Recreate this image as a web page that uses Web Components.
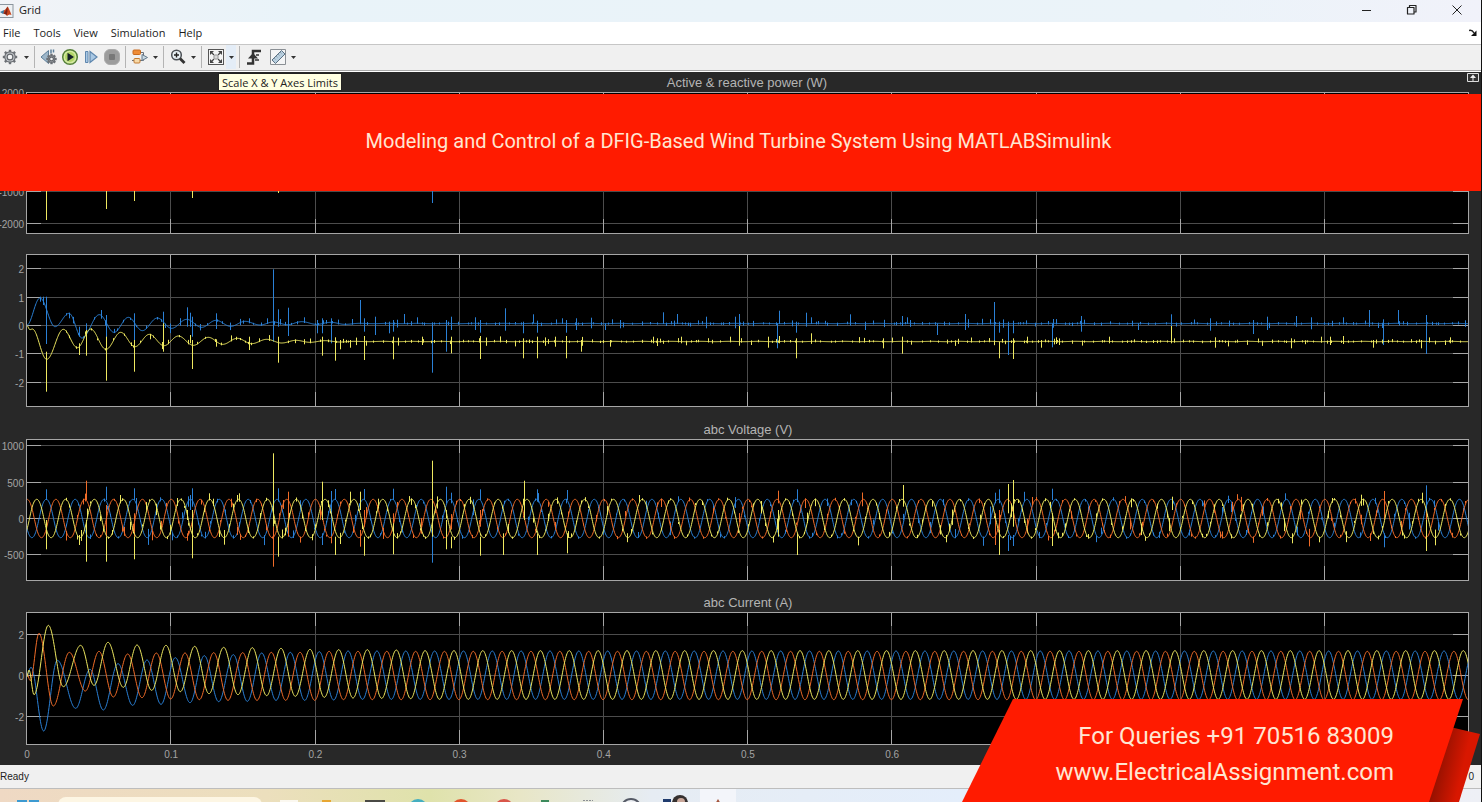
<!DOCTYPE html>
<html lang="en">
<head>
<meta charset="utf-8">
<title>Grid</title>
<style>
  body { margin: 0; background: #282828; }
</style>
</head>
<body>
<scope-app></scope-app>

<script>
const UI = '"Open Sans", "Noto Sans", sans-serif';
const ARIAL = '"Liberation Sans", Arial, sans-serif';

function define(name, html, setup) {
  const template = document.createElement('template');
  template.innerHTML = html;
  customElements.define(name, class extends HTMLElement {
    constructor() {
      super();
      this.attachShadow({ mode: 'open' }).append(template.content.cloneNode(true));
    }
    connectedCallback() { if (setup) setup(this, this.shadowRoot); }
  });
}

/* ---------- title bar ---------- */
define('title-bar', `
<style>
  :host { display: flex; align-items: center; height: 22px; background: linear-gradient(90deg, #f1f3f7, #e9f3f9 20%, #ebf3f9 80%, #f1f2fa); font: 11px/20px ${UI}; color: #1a1a1a; }
  h1 { margin: 0 auto 2px 5px; font: inherit; }
  svg { display: block; }
  button { width: 45px; height: 20px; padding: 0; border: 0; background: none; display: grid; place-items: center; }
  .controls { display: flex; padding-right: 2px; margin-bottom: 2px; }
</style>
<svg width="14" height="15" viewBox="0 0 14 15" aria-hidden="true">
  <rect x="-1" y=".5" width="14" height="13" fill="#eef1f4" stroke="#8b959e"/>
  <path d="M0 8 4 6 5.500 8 3 10z" fill="#3f7fa8"/>
  <path d="M4 6.500Q6 5 7.500 2.500 9 4 11.500 11 9 9.500 7 12 6 9.500 3.500 10z" fill="#c8461f"/>
  <path d="M7.500 2.500Q8 6 6.500 11.500 5.500 9 3.500 10 6 7 7.500 2.500z" fill="#7c2318"/>
</svg>
<h1><slot></slot></h1>
<div class="controls">
  <button aria-label="Minimize"><svg width="12" height="12"><path d="M1 6.500H10" stroke="#222" fill="none"/></svg></button>
  <button aria-label="Restore"><svg width="12" height="12"><path d="M1.500 3.500h6.500v6.500H1.500zM3.500 3V1.500H10V8H8.500" stroke="#222" stroke-width="1.200" fill="none" stroke-linejoin="round"/></svg></button>
  <button aria-label="Close"><svg width="12" height="12"><path d="M1.500 1.500l9 9M10.500 1.500l-9 9" stroke="#222" fill="none"/></svg></button>
</div>`);

/* ---------- menu bar ---------- */
define('menu-bar', `
<style>
  :host { display: flex; align-items: center; height: 22px; background: #fff; }
  nav { display: flex; flex: 1; gap: 13px; padding-left: 3px; }
  button { padding: 0; border: 0; background: none; color: #1c1c1c; font: 11px/20px ${UI}; }
  .dock { padding: 0 4px 0 0; line-height: 0; }
</style>
<nav aria-label="Menu">
  <button>File</button><button>Tools</button><button>View</button><button>Simulation</button><button>Help</button>
</nav>
<button class="dock" aria-label="Dock window"><svg width="8" height="8"><path d="M0 1.500Q3 .5 5 4" stroke="#222" fill="none" stroke-width="1.500"/><path d="M7.500 1.500V7H2z" fill="#111"/></svg></button>`);

/* ---------- toolbar ---------- */
const GEAR = (cx, cy, r) => {
  let teeth = '';
  for (let i = 0; i < 8; i++) teeth += `<rect x="${cx - 1.2}" y="${cy - r - 1.4}" width="2.4" height="3" transform="rotate(${i * 45} ${cx} ${cy})"/>`;
  return `<g fill="#6c7075">${teeth}<circle cx="${cx}" cy="${cy}" r="${r}"/></g><circle cx="${cx}" cy="${cy}" r="${r - 1.2}" fill="#c9ccd0"/><circle cx="${cx}" cy="${cy}" r="${r / 2}" fill="#f4f5f6" stroke="#62666b" stroke-width="1.2"/>`;
};
const ICONS = {
  gear: GEAR(8, 9, 5.8),
  back: `<path d="M8.500 2.500v13L1 9z" fill="#9db6c9" stroke="#5d7f9a"/><path d="M11 1.500v4M13.500 1.500v3" stroke="#5d7f9a" stroke-width="1.500"/>` + GEAR(11.5, 11, 3.8),
  run: `<circle cx="9" cy="9" r="7.300" fill="#d5eaa0" stroke="#56803a" stroke-width="1.500"/><circle cx="9" cy="9" r="5" fill="#b2d568"/><path d="M6.500 4.800 13 9l-6.500 4.200z" fill="#16202a"/>`,
  step: `<path d="M3.500 3.500h2.500v11H3.500z" fill="#a9c8e4" stroke="#5f87ae"/><path d="M8 3.500 15 9l-7 5.500z" fill="#a9c8e4" stroke="#5f87ae" stroke-width="1.200"/>`,
  stop: `<rect x="1.500" y="1.500" width="15" height="15" rx="5.500" fill="#9c9c9c" stroke="#aaa"/><rect x="6" y="6" width="6" height="6" rx="1" fill="#787878"/>`,
  model: `<rect x="2" y="2" width="7.500" height="4.500" rx="1" fill="#ef8c36" stroke="#c86a1e"/><path d="M10 4.500h2.500V8M1 12.500h2M7.500 12.500h5V11" fill="none" stroke="#687078"/><path d="M11 6.500 16.500 9.500 11 12.500z" fill="#c9dae5" stroke="#65798a"/><rect x="3" y="10.500" width="6" height="4.500" rx="1" fill="#f7d9a8" stroke="#c27a32"/>`,
  zoom: `<circle cx="7.500" cy="7" r="4.800" fill="#e9f1f5" stroke="#4a4f54" stroke-width="1.500"/><path d="M5 7h5M7.500 4.500v5" stroke="#222" stroke-width="1.400"/><path d="m11 10.500 4.500 4.500" stroke="#333" stroke-width="2.800"/>`,
  fit: `<rect x="1.500" y="1.500" width="15" height="15" fill="#f4f4f4" stroke="#555"/><path d="M3 7V3h4zM15 7V3h-4zM3 11v4h4zM15 11v4h-4z" fill="#444"/><path d="m4 4 3 3M14 4l-3 3M4 14l3-3M14 14l-3-3" stroke="#444" stroke-width="1.300"/><circle cx="9" cy="9" r="2.200" fill="#d8d8d8" stroke="#999"/>`,
  trigger: `<path d="M2 15.500h6V3h8" fill="none" stroke="#333" stroke-width="2.500"/><path d="M3 10.500h10L8 5z" fill="#333"/><path d="M10 12h4M11 7h3" stroke="#333" stroke-width="1.500"/>`,
  ruler: `<path d="M1.500 1.500h15v15h-15z" fill="#f4f5f6" stroke="#8a8f94"/><path d="M3 12 12.500 2.500 16 6 6.500 15.500z" fill="#b8cfdf" stroke="#5c7183"/><path d="m7 8 1.500 1.500M9 6l1.500 1.500M11 4l1.500 1.500M5 10l1.500 1.500" stroke="#8aa0b0"/>`
};

define('tool-button', `
<style>
  :host { display: block; }
  button { display: grid; place-items: center; width: 21px; height: 24px; padding: 0; border: 0; background: none; }
  :host([caret]) button { width: 10px; }
  :host([active]) button { background: #e4edf7; }
  svg { display: block; }
</style>
<button></button>`, (el, root) => {
  const b = root.querySelector('button');
  b.setAttribute('aria-label', el.getAttribute('label'));
  b.innerHTML = el.hasAttribute('caret')
    ? '<svg width="5" height="3"><path d="M0 0h5L2.500 3z" fill="#333"/></svg>'
    : `<svg width="18" height="18">${ICONS[el.getAttribute('icon')]}</svg>`;
});

define('tool-bar', `
<style>
  :host { display: flex; align-items: center; box-sizing: border-box; height: 28px; padding-bottom: 2px; background: #f0f0f0; border-top: 1px solid #c6c6c6; border-bottom: 1px solid #fff; box-shadow: inset 0 -1px #a8a8a8; }
  .group { display: flex; }
  .sep { width: 1px; height: 22px; margin: 0 3px; background: #b4b4b4; }
  .last { margin-left: 3px; }
  .tip-anchor { position: relative; }
  [role=tooltip] { position: absolute; left: 13px; top: 28px; z-index: 3; box-sizing: border-box; height: 18px; padding: 0 3px; border: 1px solid #222; background: #ffffe1; color: #222; font: 11px/17px ${UI}; white-space: nowrap; }
</style>
<div class="group"><tool-button icon="gear" label="Configuration"></tool-button><tool-button caret label="Configuration options"></tool-button></div>
<div class="sep"></div>
<div class="group"><tool-button icon="back" label="Step back"></tool-button><tool-button icon="run" label="Run"></tool-button><tool-button icon="step" label="Step forward"></tool-button><tool-button icon="stop" label="Stop"></tool-button></div>
<div class="sep"></div>
<div class="group"><tool-button icon="model" label="Highlight block"></tool-button><tool-button caret label="Highlight options"></tool-button></div>
<div class="sep"></div>
<div class="group"><tool-button icon="zoom" label="Zoom"></tool-button><tool-button caret label="Zoom options"></tool-button></div>
<div class="sep"></div>
<div class="group tip-anchor"><tool-button icon="fit" label="Scale axes"></tool-button><tool-button caret active label="Scale options"></tool-button><span role="tooltip">Scale X &amp; Y Axes Limits</span></div>
<div class="sep"></div>
<div class="group"><tool-button icon="trigger" label="Triggers"></tool-button></div>
<div class="group last"><tool-button icon="ruler" label="Cursor measurements"></tool-button><tool-button caret label="Measurement options"></tool-button></div>`);

/* ---------- signals ---------- */
const YELLOW = '#eee860', BLUE = '#2a80d6', ORANGE = '#f06c28';
const HALF = 14.42;          // half a 50 Hz cycle on a 1442-unit, one-second axis
const SPAN = 1442;

function random(seed) {
  return () => (seed = (seed * 16807) % 2147483647) / 2147483647;
}
/* Smooth curve through alternating extrema, given as [x, y] in thirds of a unit. */
function throughExtrema(points, high, low, top) {
  const p = points.map(([x, y]) => [x / 3 - 26.5, y / 3 - top]);
  let up = points[points.length - 1][1] > (high + low) / 2;
  while (p[p.length - 1][0] < SPAN) {
    p.push([p[p.length - 1][0] + HALF, (up ? high : low) / 3 - top]);
    up = !up;
  }
  let i = 0;
  return x => {
    if (x < p[i][0]) i = 0;
    while (i < p.length - 2 && x > p[i + 1][0]) i++;
    const u = Math.min(1, Math.max(0, (x - p[i][0]) / (p[i + 1][0] - p[i][0])));
    return p[i][1] + (p[i + 1][1] - p[i][1]) * (1 - Math.cos(Math.PI * u)) / 2;
  };
}
function trace(f) {
  let d = '';
  for (let x = 0; x <= SPAN; x += 0.5) d += (x ? 'L' : 'M') + (x + .5) + ' ' + f(x).toFixed(2);
  return d;
}
function spikes(list, from, top) {
  return list.map(([x, a, b]) => `M${Math.floor(from + x / 3) - 25.5} ${(a / 3 - top).toFixed(1)}V${(b / 3 - top).toFixed(1)}`).join('');
}
function jitter(f, seed, gap, size) {
  const r = random(seed);
  let d = '';
  for (let x = 40 + r() * gap; x < SPAN; x += 2 + r() * gap) {
    const s = Math.pow(r(), 3) * size + 1, dir = r();
    const y = f(x), px = Math.floor(x) + .5;
    d += `M${px} ${(y - (dir < .7 ? s : 1)).toFixed(1)}V${(y + (dir > .4 ? s : 1)).toFixed(1)}`;
  }
  return d;
}

const SIGNALS = {
  power() {
    return [
      [YELLOW, spikes([[140,0,120],[318,0,87],[403,0,63],[576,0,54],[835,0,39]], 0, -88)],
      [BLUE, spikes([[1298,0,69]], 0, -88)]
    ];
  },
  perUnit() {
    const b = throughExtrema([[80,436],[120,354],[165,440],[207,400],[246,474],[298,404],[342,457],[385,412],[427,452],[472,414],[515,445],[560,418],[605,442],[648,421],[692,439],[735,424],[780,435],[820,426],[862,434],[905,425],[950,433],[992,427],[1035,433]], 430, 431, 74);
    const y = throughExtrema([[80,436],[90,449],[97,447],[140,538],[190,448],[232,503],[272,447],[318,508],[362,457],[405,500],[448,463],[492,497],[535,468],[580,496],[625,472],[668,493],[712,475],[755,491],[800,478],[845,489],[888,481],[930,487],[975,482],[1020,486]], 484, 485, 74);
    return [
      [BLUE, trace(b) + jitter(b, 71, 9, 4)
        + spikes([[120,350,365],[130,350,375],[140,350,492],[207,398,415],[238,440,470],[260,430,470],[303,390,415],[318,405,500],[403,400,500],[489,395,440],[563,382,440],[571,398,440],[576,410,470],[650,400,447],[748,415,430],[820,268,485],[835,388,440],[865,383,468],[953,420,460],[966,415,460],[993,415,490],[1082,360,430],[1094,415,455],[1125,410,465],[1168,425,460],[1180,420,455],[1212,402,432],[1252,412,432],[1298,430,578],[1340,420,515],[1354,410,450],[1427,412,450],[1440,420,458]], 0, 74)
        + spikes([[45,385,452],[100,425,460],[130,403,430],[143,422,458],[217,415,432],[230,420,458],[260,415,450],[303,413,445],[345,430,450],[390,420,445],[519,397,432],[561,402,432],[649,410,445],[735,410,445],[748,402,445],[863,430,505],[869,392,432],[920,425,458],[949,398,432],[965,412,432],[1081,403,432],[1125,425,450],[1238,408,438],[1252,412,432],[1342,430,465],[1427,402,450]], 490, 74)
        + spikes([[44,366,485],[57,425,458],[85,425,525],[100,422,460],[217,430,502],[303,408,455],[475,430,450],[575,403,432],[690,415,452],[820,420,462],[863,410,450],[950,408,440],[993,412,448],[1090,412,432],[1168,390,440],[1211,418,495],[1254,390,432],[1340,405,522]], 980, 74)],
      [YELLOW, trace(y) + jitter(y, 33, 9, 4)
        + spikes([[140,515,635],[238,490,525],[260,450,527],[318,470,602],[403,480,575],[489,430,515],[571,465,490],[576,480,567],[650,478,500],[748,470,510],[835,470,548],[966,470,527],[1007,472,542],[1022,480,508],[1052,480,503],[1094,468,540],[1180,470,538],[1268,470,495],[1354,470,520],[1440,468,537]], 0, 74)
        + spikes([[100,475,535],[143,470,535],[196,470,500],[230,468,535],[273,480,515],[360,480,500],[489,470,490],[503,475,498],[575,470,490],[748,438,497],[835,470,503],[869,468,490],[920,475,535],[965,460,490],[1180,475,505],[1238,470,521]], 490, 74)
        + spikes([[57,485,535],[100,475,537],[143,470,490],[185,480,503],[229,472,492],[387,470,490],[575,438,490],[705,472,503],[935,475,505],[1051,470,495],[1090,468,492],[1180,480,503],[1325,480,505],[1410,472,490]], 980, 74)]
    ];
  },
  voltage() {
    const wave = peak => x => 79.5 - 19.2 * Math.tanh(.6 * Math.cos(Math.PI * (x - peak) / HALF)) / Math.tanh(.6);
    const y = wave(10.2), b = wave(19.8), o = wave(29.4);
    return [
      [BLUE, trace(b) + jitter(b, 17, 13, 8)
        + spikes([[140,208,240],[318,200,240],[403,205,240],[566,230,260],[571,225,270],[576,205,260],[835,205,240],[966,340,375],[993,213,350],[1007,207,240],[1094,207,240],[1180,206,240],[1298,350,428],[1340,200,250],[1354,218,250],[1440,208,240]], 0, 19)
        + spikes([[141,208,245],[231,210,240],[921,208,240],[1515,218,250],[1527,208,250],[1556,345,393],[1569,345,378],[1686,206,240],[2682,340,382],[2808,196,300]], 490, 19)],
      [ORANGE, trace(o) + jitter(o, 91, 13, 8)
        + spikes([[260,182,240],[318,255,350],[403,280,350],[563,340,362],[820,320,440],[865,215,350],[993,350,370],[1082,330,380],[1094,270,320],[1180,280,340],[1298,240,330],[1440,270,320]], 0, 19)
        + spikes([[864,212,250],[1515,280,375],[1527,270,330],[2640,340,363],[2682,213,300],[2808,270,330]], 490, 19)],
      [YELLOW, trace(y) + jitter(y, 57, 9, 7)
        + spikes([[140,300,388],[238,345,375],[260,300,425],[318,350,425],[361,225,250],[403,350,418],[563,270,300],[576,270,415],[712,225,245],[820,100,320],[835,350,410],[966,185,300],[1007,350,405],[1022,340,372],[1052,215,250],[1082,215,270],[1094,350,407],[1180,310,403],[1298,122,350],[1340,300,388],[1354,350,385],[1440,350,407]], 0, 19)
        + spikes([[39,340,405],[102,182,300],[141,340,405],[231,340,400],[864,270,350],[921,340,405],[1239,195,260],[1527,330,405],[1556,192,280],[1569,180,320],[1686,280,378],[2046,230,270],[2406,340,370],[2796,218,250],[2808,300,393]], 490, 19)]
    ];
  },
  current() {
    const top = 22;
    const b = throughExtrema([[80,257],[93,232],[131,423],[172,211],[227,355],[270,238],[310,360],[354,221],[398,346],[441,210],[483,343],[526,203],[570,338],[613,197],[656,335],[700,194],[742,334],[785,189],[828,331],[871,187],[914,331],[958,185],[1001,330]], 183, 328, top);
    const o = throughExtrema([[80,250],[91,272],[117,130],[160,348],[208,187],[256,303],[297,184],[340,321],[383,192],[426,323],[469,189],[512,327],[555,189],[598,329],[641,188],[684,331],[728,188],[771,331],[814,187],[857,331],[900,187],[944,331]], 184, 329, top);
    const y = throughExtrema([[80,262],[87,240],[102,314],[145,106],[190,290],[242,166],[282,286],[324,157],[370,292],[411,165],[455,301],[498,166],[541,305],[584,169],[627,311],[671,172],[714,314],[757,173],[800,317],[843,175],[886,319],[930,178],[973,322],[1016,179],[1059,324],[1102,179],[1145,325],[1189,180],[1232,326]], 182, 328, top);
    return [[BLUE, trace(b)], [ORANGE, trace(o)], [YELLOW, trace(y)]];
  }
};

/* ---------- one plot: y labels and a drawing area ---------- */
define('scope-plot', `
<style>
  :host { display: flex; min-height: 0; padding-right: 13px; color: #a4a4a4; font: 10px/4px ${ARIAL}; }
  .labels { width: 24px; padding-right: 2px; flex: none; display: flex; flex-direction: column; align-items: flex-end; }
  .labels i { flex-basis: 0; }
  .labels span { height: 0; white-space: nowrap; }
  svg { flex: 1; width: 0; height: 100%; overflow: visible; background: #000; }
  path, rect { fill: none; vector-effect: non-scaling-stroke; }
  .grid, .tick, rect { shape-rendering: crispEdges; }
  .grid { stroke: #4c4c4c; }
  .tick, rect { stroke: #a6a6a6; }
</style>
<div class="labels"></div>
<svg preserveAspectRatio="none" role="img"></svg>`, (el, root) => {
  const H = +el.getAttribute('units');
  // ticks: "label@y" pairs, y in the plot's own units
  const ticks = el.getAttribute('ticks').split(' ').map(t => t.split('@'));
  let last = 0, labels = '', grid = '', tick = '';
  for (const [text, at] of ticks) {
    const y = +at;
    labels += `<i style="flex-grow:${y - last}"></i><span>${text}</span>`;
    last = y;
    if (y > 0) {
      grid += `M0 ${y + .5}H${SPAN}`;
      tick += `M0 ${y + .5}h15M${SPAN} ${y + .5}h-15`;
    }
  }
  labels += `<i style="flex-grow:${H - last}"></i>`;
  for (let i = 1; i < 10; i++) {
    const x = Math.ceil(i * SPAN / 10 - .2) + .5;
    grid += `M${x} 0V${H}`;
    tick += `M${x} 0v14M${x} ${H}v-14`;
  }
  root.querySelector('.labels').innerHTML = labels;
  const svg = root.querySelector('svg');
  svg.setAttribute('viewBox', `0 0 ${SPAN} ${H}`);
  svg.setAttribute('aria-label', el.getAttribute('signal'));
  svg.innerHTML = `<path class="grid" d="${grid}"/><path class="tick" d="${tick}"/>`
    + SIGNALS[el.getAttribute('signal')]().map(([c, d]) => `<path stroke="${c}" d="${d}"/>`).join('')
    + `<rect x=".5" y=".5" width="${SPAN}" height="${H}"/>`;
});

define('scope-view', `
<style>
  :host { display: grid; min-height: 0; grid-template-rows: 20px 141fr 21px 152fr 33px 141fr 32px 132fr 21px; background: #282828; color: #b4b4b4; font: 13px/18px ${ARIAL}; overflow: hidden; }
  h2 { margin: 0 12px 0 27px; align-self: end; text-align: center; font: inherit; }
  header { display: grid; grid-template-columns: 1fr auto; align-items: start; padding-right: 1px; }
  header h2 { margin-right: 0; line-height: 21px; }
  header button { width: 13px; padding: 1px 0; border: 0; background: none; line-height: 0; }
  .time { display: flex; justify-content: space-between; margin: 0 12px 0 27px; font-size: 10px; line-height: 21px; color: #a4a4a4; }
  .time span { width: 0; display: flex; justify-content: center; }
</style>
<header><h2>Active &amp; reactive power (W)</h2>
<button aria-label="Maximize axes"><svg width="13" height="10"><path d="M.5.5h11v8H.5z" fill="#333" stroke="#ddd"/><path d="M6 1.500 9 5H3zM5.500 4h1v4h-1z" fill="#eee"/></svg></button></header>
<scope-plot signal="power" units="141" ticks="2000@0 -1000@99 -2000@131"></scope-plot>
<div></div>
<scope-plot signal="perUnit" units="152" ticks="2@14 1@43 0@71 -1@99 -2@128"></scope-plot>
<h2>abc Voltage (V)</h2>
<scope-plot signal="voltage" units="141" ticks="1000@6 500@43 0@79 -500@115"></scope-plot>
<h2>abc Current (A)</h2>
<scope-plot signal="current" units="132" ticks="2@22 0@63 -2@104"></scope-plot>
<div class="time"><span>0</span><span>0.1</span><span>0.2</span><span>0.3</span><span>0.4</span><span>0.5</span><span>0.6</span><span></span><span></span><span></span><span></span></div>`);

/* ---------- status bar and taskbar ---------- */
define('status-bar', `
<style>
  :host { display: flex; justify-content: space-between; height: 23px; padding-right: 7px; background: #f0f0f0; font: 10px/24px ${ARIAL}; color: #222; }
</style>
<span>Ready</span><span>0</span>`);

define('task-bar', `
<style>
  :host { display: flex; box-sizing: border-box; height: 14px; overflow: hidden; border-top: 1px solid #bdbdbd; background: linear-gradient(90deg, #efd9c4, #ecdfbd 18%, #dfe2ab 29%, #e8e6c6 35%, #e6ecf3 44%, #e4eefb 65%, #eef0f6); }
  button { display: flex; justify-content: center; align-items: flex-start; width: 43px; height: 40px; padding: 6px 0 0; border: 0; background: none; flex: none; line-height: 0; }
  .start { width: 56px; }
  input { width: 204px; height: 32px; margin: 8px 5px 0 2px; padding: 0 12px; box-sizing: border-box; border: 0; border-radius: 8px; background: #fdf6e4; flex: none; }
  .active { background: linear-gradient(90deg, transparent 3px, #f3f5fa 3px, #f3f5fa 39px, transparent 39px); }
</style>
<button class="start" aria-label="Start"><svg width="22" height="22" viewBox="0 -5 22 22"><path d="M0 0h10v10H0zM12 0h10v10H12z" fill="#3d9ad1"/></svg></button>
<input type="search" aria-label="Search">
<button aria-label="Task view"><svg width="22" height="22"><path d="M2 5h18v12H2z" fill="#fbf8f0"/></svg></button>
<button aria-label="Files"><svg width="22" height="22"><path d="M1 5h9v8H1z" fill="#e8a733"/></svg></button>
<button aria-label="Store"><svg width="22" height="22"><path d="M1 5h20v12H1z" fill="#4a4a45"/></svg></button>
<button aria-label="Edge"><svg width="22" height="24"><circle cx="11" cy="14" r="10" fill="#44aec0"/></svg></button>
<button aria-label="Browser"><svg width="22" height="24"><circle cx="11" cy="14" r="10" fill="#e2542c"/></svg></button>
<button aria-label="Chrome"><svg width="22" height="24"><circle cx="11" cy="14" r="10" fill="#d9564a"/></svg></button>
<button aria-label="Sheets"><svg width="22" height="22"><path d="M5 5h8v6H5z" fill="#3c8a5c"/></svg></button>
<button aria-label="Notes"><svg width="22" height="22"><path d="M4 5.500h10" stroke="#8b8f95" stroke-dasharray="2 1"/></svg></button>
<button aria-label="Recorder"><svg width="22" height="24"><circle cx="9" cy="14" r="10" fill="#eef0f4" stroke="#555a66" stroke-width="2"/></svg></button>
<button aria-label="Account"><svg width="30" height="24"><path d="M2 4h8v14H2z" fill="#1f3b6e"/><circle cx="19" cy="8" r="8" fill="#35302f"/><circle cx="20" cy="7" r="4" fill="#c9a79a"/></svg></button>
<button class="active" aria-label="Scope"><svg width="22" height="22"><path d="m7 9 3-5 3 5z" fill="#a5553c"/></svg></button>`);

/* ---------- overlays ---------- */
define('title-banner', `
<style>
  :host { position: absolute; inset: 94px 0 auto 0; height: 97px; display: grid; place-items: center; padding: 0 4px 3px 0; box-sizing: border-box; background: #ff1b00; color: #ffe6d2; font: 20px/30px Roboto, sans-serif; }
</style>
<slot></slot>`);

define('contact-ribbon', `
<style>
  :host { position: absolute; right: 0; bottom: 0; width: 519px; height: 103px; box-sizing: border-box; padding: 19px 87px 0 0; text-align: right; color: #ffe6d2; font: 24px/36px Roboto, sans-serif; }
  svg { position: absolute; inset: 0; width: 100%; height: 100%; }
  p { position: relative; margin: 0; }
  a { color: inherit; text-decoration: none; }
</style>
<svg viewBox="0 0 519 103" aria-hidden="true">
  <defs><linearGradient id="fold" x1="0" y1="0" x2="1" y2="0.300"><stop offset=".35" stop-color="#8f1000"/><stop offset=".8" stop-color="#d81700"/></linearGradient></defs>
  <path d="M488 28 518 35 497 103H460z" fill="url(#fold)"/>
  <path d="M51 0H501L467 103H0z" fill="#ff1b00"/>
</svg>
<p>For Queries +91 70516 83009</p>
<p><a href="#site">www.ElectricalAssignment.com</a></p>`);

define('scope-app', `
<style>
  :host { position: relative; display: grid; grid-template-rows: auto auto auto 1fr auto auto; height: 100vh; min-height: 600px; box-sizing: border-box; border-right: 1px solid #111; overflow: hidden; }
</style>
<title-bar>Grid</title-bar>
<menu-bar></menu-bar>
<tool-bar></tool-bar>
<scope-view></scope-view>
<status-bar></status-bar>
<task-bar></task-bar>
<title-banner>Modeling and Control of a DFIG-Based Wind Turbine System Using MATLABSimulink</title-banner>
<contact-ribbon></contact-ribbon>`);
</script>
</body>
</html>
